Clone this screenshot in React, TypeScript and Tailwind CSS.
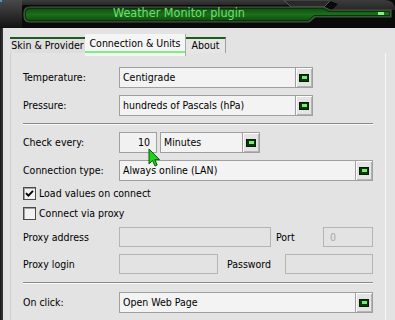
import React from "react";

function DropBtn() {
  return (
    <div className="w-[17px] h-full border-l border-[#a0a0a0] bg-[#e4e4e4] flex items-center justify-center shadow-[inset_1px_1px_0_#ffffff,inset_-1px_-1px_0_#b4b4b4]">
      <div className="w-[10px] h-[8px] bg-[#0a3a0a] border border-[#041c04] flex items-center justify-center">
        <div className="w-[5px] h-[3px] bg-[#7ae87a]" />
      </div>
    </div>
  );
}

function Select({ text, className }: { text: string; className: string }) {
  return (
    <div className={"h-[21px] border border-[#a0a0a0] bg-[#f3f3f3] flex " + className}>
      <div className="flex-1 pl-[3px] flex items-center whitespace-nowrap overflow-hidden">{text}</div>
      <DropBtn />
    </div>
  );
}

function Label({ children }: { children: React.ReactNode }) {
  return <div className="w-[96px] shrink-0 flex items-center">{children}</div>;
}

function Disabled({ className, text }: { className: string; text?: string }) {
  return (
    <div className={"h-[20px] border border-[#b4b4b4] bg-[#e3e3e3] flex items-center pl-[6px] text-[#a8a8a8] " + className}>
      {text}
    </div>
  );
}

function Checkbox({ checked, label }: { checked: boolean; label: string }) {
  return (
    <div className="flex items-center h-[13px]">
      <div className="w-[13px] h-[13px] border border-[#4a4a4a] bg-[#f2f2f2] shadow-[inset_1px_1px_0_#a0a0a0] flex items-center justify-center">
        {checked && (
          <svg width="9" height="9" viewBox="0 0 9 9">
            <path d="M1 4.2 L3.4 6.6 L8 1.8" fill="none" stroke="#000" strokeWidth="1.9" />
          </svg>
        )}
      </div>
      <div className="ml-[3px]">{label}</div>
    </div>
  );
}

function Sep() {
  return <div className="h-[2px] border-t border-[#8a8a8a] border-b border-b-[#f8f8f8]" />;
}

function TitleBar() {
  return (
    <div className="relative h-[28px] bg-[#0a0a0a]">
      <svg className="absolute left-0 top-0" width="395" height="28" viewBox="0 0 395 28">
        <defs>
          <linearGradient id="lg" x1="0" y1="0" x2="0" y2="1">
            <stop offset="0" stopColor="#4a4a4a" />
            <stop offset="1" stopColor="#121212" />
          </linearGradient>
          <linearGradient id="gb" x1="0" y1="0" x2="0" y2="1">
            <stop offset="0" stopColor="#0d460d" />
            <stop offset="0.5" stopColor="#1c701c" />
            <stop offset="1" stopColor="#0d460d" />
          </linearGradient>
          <linearGradient id="tb" x1="0" y1="0" x2="0" y2="1">
            <stop offset="0" stopColor="#3c3c3c" />
            <stop offset="1" stopColor="#262626" />
          </linearGradient>
        </defs>
        <path d="M0 0 H28 L22 6 V28 H0 Z" fill="url(#lg)" />
        <rect x="0" y="0" width="2" height="2" fill="#5a8ad0" />
        <rect x="22" y="0" width="266" height="5" fill="url(#tb)" />
        <path d="M284 0 H331 L324 7 H291 Z" fill="#2a2a2a" stroke="#5a5a5a" strokeWidth="1" />
        <path d="M328 0 H385 Q395 0 395 10 V10 H332 L338 4 Z" fill="url(#tb)" />
        <path
          d="M30 7 H324 L330 10 H391 V17 H315 L309 22 H30 Q24 22 24 16 V13 Q24 7 30 7 Z"
          fill="url(#gb)"
          stroke="#4e4e4e"
          strokeWidth="1.2"
        />
        <path
          d="M30 8.5 H323 L329 11.5 H389.5 V15.5 H314 L308 20.5 H30 Q25.5 20.5 25.5 16 V13 Q25.5 8.5 30 8.5 Z"
          fill="none"
          stroke="#0a330a"
          strokeWidth="1"
        />
        <rect x="378" y="12" width="6" height="3" fill="#80f080" />
      </svg>
      <div className="relative h-[28px] pl-[113px] flex items-center pb-[1px] text-[12.5px] text-[#6fe06f] leading-none whitespace-nowrap">
        Weather Monitor plugin
      </div>
    </div>
  );
}

export default function App() {
  return (
    <div className="w-[395px] h-[320px] overflow-hidden relative bg-[#e3e3e3] text-[10.5px] text-black leading-none [font-family:'DejaVu_Sans_Condensed','DejaVu_Sans',sans-serif]">
      <TitleBar />
      <div className="flex h-[292px]">
        <div className="w-[3px] bg-gradient-to-r from-[#1a1a1a] to-[#3a3a3a]" />
        <div className="w-[7px]" />
        <div className="w-[376px] flex flex-col">
          {/* tabs */}
          <div className="h-[25px] flex items-end">
            <div className="w-[75px] h-[16px] bg-[#dedede] border-t-2 border-[#1f5c1f] flex items-center justify-center whitespace-nowrap pb-[1px]">
              Skin &amp; Provider
            </div>
            <div className="relative z-10 w-[100px] h-[22px] mb-[-3px] bg-[#f5f5f5] flex flex-col shadow-[1px_0_0_#a8a8a8]">
              <div className="h-[17px] flex items-center justify-center whitespace-nowrap pt-[1px]">
                Connection &amp; Units
              </div>
              <div className="h-[2px] bg-[#7ef07e]" />
            </div>
            <div className="w-[40px] h-[16px] bg-[#e6e6e6] border-t-2 border-[#1f5c1f] border-r border-r-[#a0a0a0] flex items-center justify-center pb-[1px] ml-[1px]">
              About
            </div>
          </div>
          {/* panel */}
          <div className="flex-1 border-l border-[#cfcfcf] border-r border-r-[#f6f6f6] pl-[12px] pr-[12px] pt-[14px] flex flex-col">
            <div className="flex h-[21px]">
              <Label>Temperature:</Label>
              <Select text="Centigrade" className="w-[194px]" />
            </div>
            <div className="flex h-[21px] mt-[7px]">
              <Label>Pressure:</Label>
              <Select text="hundreds of Pascals (hPa)" className="w-[194px]" />
            </div>
            <div className="mt-[7px]">
              <Sep />
            </div>
            <div className="flex h-[21px] mt-[7px]">
              <Label>Check every:</Label>
              <div className="w-[38px] h-[21px] border border-[#a0a0a0] bg-[#f1f1f1] flex items-center justify-end pr-[6px]">
                10
              </div>
              <Select text="Minutes" className="w-[100px] ml-[3px]" />
            </div>
            <div className="flex h-[21px] mt-[7px]">
              <Label>Connection type:</Label>
              <Select text="Always online (LAN)" className="flex-1" />
            </div>
            <div className="mt-[6px]">
              <Checkbox checked label="Load values on connect" />
            </div>
            <div className="mt-[7px]">
              <Checkbox checked={false} label="Connect via proxy" />
            </div>
            <div className="flex h-[20px] mt-[7px]">
              <Label>Proxy address</Label>
              <Disabled className="w-[152px]" />
              <div className="ml-[5px] flex items-center">Port</div>
              <Disabled className="w-[50px] ml-auto" text="0" />
            </div>
            <div className="flex h-[20px] mt-[7px]">
              <Label>Proxy login</Label>
              <Disabled className="w-[99px]" />
              <div className="ml-[9px] flex items-center">Password</div>
              <Disabled className="w-[88px] ml-auto" />
            </div>
            <div className="mt-[8px]">
              <Sep />
            </div>
            <div className="flex h-[21px] mt-[8px]">
              <Label>On click:</Label>
              <Select text="Open Web Page" className="flex-1" />
            </div>
          </div>
        </div>
      </div>
      <svg className="absolute left-[148px] top-[148px]" width="13" height="20" viewBox="0 0 13 20">
        <path
          d="M1 1 L1 16 L4.5 12.5 L7 18 L9.2 17 L6.8 11.6 L11.5 11.6 Z"
          fill="#1ed21e"
          stroke="#0b5a0b"
          strokeWidth="1"
          strokeLinejoin="round"
        />
      </svg>
    </div>
  );
}
